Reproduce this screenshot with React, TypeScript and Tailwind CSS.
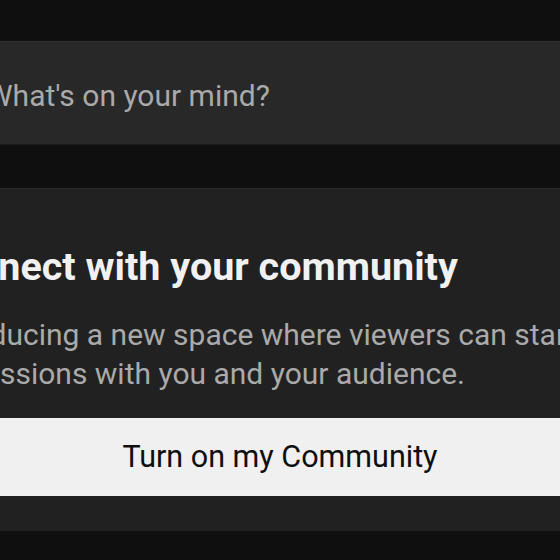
export default function App() {
  return (
    <div className="w-[560px] h-[560px] overflow-hidden bg-[#0f0f0f] font-['Roboto',sans-serif]">
      <div className="ml-[-100px] w-[760px] pt-[41px]">
        {/* post composer */}
        <div className="h-[104px] bg-[#282828] border-t border-t-[#2f2f2f] border-b border-b-[#1b1b1b] flex items-center px-[28px] gap-[10px]">
          <div className="w-[48px] h-[48px] rounded-full bg-[#3a3a3a] shrink-0" />
          <span className="text-[30px] leading-[36px] text-[#aaaaaa] pt-[5px]">What's on your mind?</span>
        </div>

        {/* community promo */}
        <div className="mt-[43px] bg-[#212121] border-t border-t-[#292929] px-[28px] pt-[55px] pb-[35px]">
          <h2 className="text-[39.5px] leading-[46px] font-bold text-[#f1f1f1]">Connect with your community</h2>
          <p className="mt-[25px] text-[30px] leading-[39px] text-[#aaaaaa]">
            Introducing a new space where viewers can start discussions with you and your audience.
          </p>
          <button className="mt-[25px] w-full h-[78px] bg-[#f0f0f0] text-[#0f0f0f] text-[30.5px] font-normal flex items-center justify-center">
            Turn on my Community
          </button>
        </div>
      </div>
    </div>
  );
}
